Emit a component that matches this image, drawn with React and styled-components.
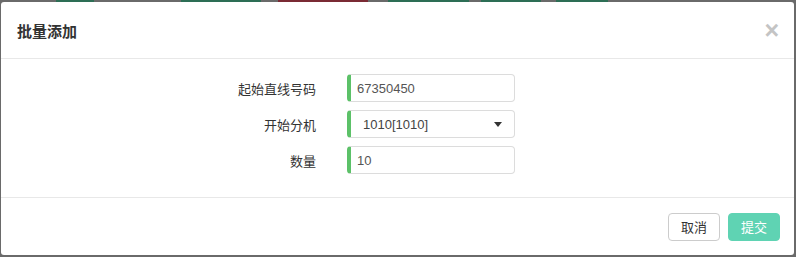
import React from "react";
import styled, { createGlobalStyle } from "styled-components";

const GlobalStyle = createGlobalStyle`
  html, body {
    margin: 0;
    padding: 0;
    background: #6a6a6a;
  }
  body {
    font-family: "Liberation Sans", "Noto Sans CJK SC", sans-serif;
  }
`;

const fields = [
  { label: "起始直线号码", value: "67350450" },
  { label: "开始分机", value: "1010[1010]", select: true },
  { label: "数量", value: "10" },
];

const App = () => {
  return (
    <>
      <GlobalStyle />
      <Backdrop>
        <TopStrip />
        <Modal>
          <Header>
            <Title>批量添加</Title>
            <Close>×</Close>
          </Header>

          <Body>
            {fields.map((field) => (
              <Row key={field.label}>
                <Label>{field.label}</Label>
                {field.select ? (
                  <Select>
                    <SelectText>{field.value}</SelectText>
                    <Caret />
                  </Select>
                ) : (
                  <Input defaultValue={field.value} />
                )}
              </Row>
            ))}
          </Body>

          <Footer>
            <Button>取消</Button>
            <Button primary>提交</Button>
          </Footer>
        </Modal>
      </Backdrop>
    </>
  );
};

export default App;

const Backdrop = styled.div`
  width: 796px;
  height: 257px;
  padding: 0 2px 2px 1px;
  box-sizing: border-box;
  display: flex;
  flex-direction: column;
  background: #6a6a6a;
`;

const TopStrip = styled.div`
  height: 2px;
  flex-shrink: 0;
  background: linear-gradient(
    to right,
    #6a6a6a 0 55px,
    #2d6e55 55px 93px,
    #6a6a6a 93px 180px,
    #2d6e55 180px 260px,
    #6a6a6a 260px 277px,
    #7a2a34 277px 367px,
    #6a6a6a 367px 387px,
    #2d6e55 387px 468px,
    #6a6a6a 468px 480px,
    #2d6e55 480px 540px,
    #6a6a6a 540px 555px,
    #2d6e55 555px 607px,
    #6a6a6a 607px
  );
`;

const Modal = styled.div`
  flex: 1;
  background: #fff;
  border-radius: 3px;
  display: flex;
  flex-direction: column;
`;

const Header = styled.div`
  height: 56px;
  padding: 0 16px;
  display: flex;
  align-items: center;
  justify-content: space-between;
  border-bottom: 1px solid #e8e8e8;
`;

const Title = styled.h4`
  margin: 0;
  font-size: 15px;
  font-weight: 600;
  color: #333;
`;

const Close = styled.span`
  font-size: 25px;
  font-weight: 700;
  color: #c4c4c4;
  line-height: 1;
  margin-right: -1px;
`;

const Body = styled.div`
  padding: 15px 0 15px;
  display: flex;
  flex-direction: column;
  gap: 8px;
  height: 139px;
  box-sizing: border-box;
  border-bottom: 1px solid #e8e8e8;
`;

const Row = styled.div`
  display: grid;
  grid-template-columns: 315px 168px;
  column-gap: 31px;
  align-items: center;
`;

const Label = styled.label`
  text-align: right;
  font-size: 13px;
  color: #333;
`;

const fieldBox = `
  height: 28px;
  box-sizing: border-box;
  border: 1px solid #dcdcdc;
  border-left: 4px solid #5cc168;
  border-radius: 4px;
  background: #fff;
  font-size: 13px;
  color: #555;
`;

const Input = styled.input`
  ${fieldBox}
  width: 168px;
  padding: 0 6px;
  font-family: "Liberation Sans", "Noto Sans CJK SC", sans-serif;
  outline: none;
`;

const Select = styled.div`
  ${fieldBox}
  width: 168px;
  padding: 0 12px 0 12px;
  display: flex;
  align-items: center;
  justify-content: space-between;
`;

const SelectText = styled.span`
  color: #444;
  font-weight: 300;
`;

const Caret = styled.span`
  width: 0;
  height: 0;
  border-left: 4.5px solid transparent;
  border-right: 4.5px solid transparent;
  border-top: 5px solid #333;
`;

const Footer = styled.div`
  flex: 1;
  padding: 0 14px;
  display: flex;
  align-items: center;
  justify-content: flex-end;
  gap: 8px;
`;

const Button = styled.button`
  height: 28px;
  padding: 0 12px;
  border-radius: 4px;
  font-size: 13px;
  font-family: "Liberation Sans", "Noto Sans CJK SC", sans-serif;
  border: 1px solid ${(p) => (p.primary ? "#5fd3b3" : "#cccccc")};
  background: ${(p) => (p.primary ? "#5fd3b3" : "#fff")};
  color: ${(p) => (p.primary ? "#fff" : "#333")};
`;
